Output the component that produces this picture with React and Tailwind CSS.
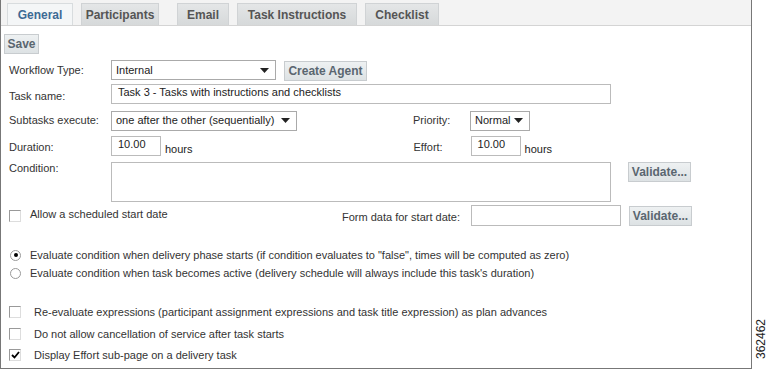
import React from "react";

const font = { fontFamily: '"Liberation Sans", Arial, sans-serif' };

function Arrow() {
  return (
    <svg width="9" height="5" viewBox="0 0 9 5" className="shrink-0">
      <path d="M0 0 H9 L4.5 5 Z" fill="#222" />
    </svg>
  );
}

function Select({ w, children }) {
  return (
    <div
      className="h-[20px] border border-[#aaa] bg-white flex items-center justify-between pl-[4px] pr-[6px] text-[11px] text-[#222]"
      style={{ width: w }}
    >
      <span>{children}</span>
      <Arrow />
    </div>
  );
}

function Btn({ children, className = "" }) {
  return (
    <div
      className={
        "h-[20px] border border-[#c8cccf] bg-gradient-to-b from-[#eef1f2] to-[#dde2e4] flex items-center justify-center text-[12px] font-bold text-[#5a6670] " +
        className
      }
    >
      {children}
    </div>
  );
}

function Check({ checked }) {
  return (
    <div className="w-[12px] h-[12px] border border-[#999] border-r-[#ddd] border-b-[#ddd] bg-white flex items-center justify-center shrink-0">
      {checked && (
        <svg width="9" height="8" viewBox="0 0 9 8">
          <path d="M1 4 L3.5 6.5 L8 1" stroke="#000" strokeWidth="1.8" fill="none" />
        </svg>
      )}
    </div>
  );
}

function Radio({ checked }) {
  return (
    <div className="w-[11px] h-[11px] rounded-full border border-[#999] bg-white flex items-center justify-center shrink-0">
      {checked && <div className="w-[4px] h-[4px] rounded-full bg-black" />}
    </div>
  );
}

function Tab({ children, active, w }) {
  return (
    <div
      className={
        "h-[22px] flex items-center justify-center text-[12px] font-bold border border-b-0 " +
        (active
          ? "bg-[#f4f6f7] text-[#3d6a94] border-[#d8dcde]"
          : "bg-gradient-to-b from-[#e4e6e7] to-[#d6d9da] text-[#555] border-[#d0d3d5]")
      }
      style={{ width: w }}
    >
      {children}
    </div>
  );
}

export default function App() {
  return (
    <div className="w-[768px] h-[370px] bg-white relative overflow-hidden text-[11px] text-[#333]" style={font}>
      <div className="w-[752px] h-[369px] border-l border-r border-b border-[#777] flex flex-col">
        {/* tab bar */}
        <div className="h-[26px] bg-[#f3f3f3] border-b border-[#d4d4d4] flex items-end pl-[6px]">
          <Tab active w={66}>General</Tab>
          <div className="w-[8px]" />
          <Tab w={78}>Participants</Tab>
          <div className="w-[18px]" />
          <Tab w={52}>Email</Tab>
          <div className="w-[8px]" />
          <Tab w={120}>Task Instructions</Tab>
          <div className="w-[8px]" />
          <Tab w={74}>Checklist</Tab>
        </div>

        <div className="pl-[3px] mt-[8px]">
          <Btn className="w-[35px] text-[11px]">Save</Btn>
        </div>

        {/* Workflow type */}
        <div className="flex items-center mt-[5px] pl-[8px]">
          <div className="w-[102px]">Workflow Type:</div>
          <Select w={165}>Internal</Select>
          <Btn className="w-[83px] ml-[8px] mt-[2px]">Create Agent</Btn>
        </div>

        {/* Task name */}
        <div className="flex items-center mt-[3px] pl-[8px]">
          <div className="w-[102px] pt-[4px]">Task name:</div>
          <div className="w-[500px] h-[20px] border border-[#bbb] bg-white pl-[6px] text-[11px] text-[#222] leading-[15px]">
            Task 3 - Tasks with instructions and checklists
          </div>
        </div>

        {/* Subtasks */}
        <div className="flex items-center mt-[6px] pl-[8px]">
          <div className="w-[102px]">Subtasks execute:</div>
          <Select w={186}>one after the other (sequentially)</Select>
          <div className="w-[116px] ml-[116px]">Priority:</div>
          <div className="-ml-[59px]">
            <Select w={60}>Normal</Select>
          </div>
        </div>

        {/* Duration */}
        <div className="flex items-center mt-[4px] pl-[8px]">
          <div className="w-[102px] pt-[2px]">Duration:</div>
          <div className="w-[50px] h-[20px] border border-[#bbb] bg-white pl-[6px] text-[11px] text-[#222] leading-[14px]">
            10.00
          </div>
          <div className="ml-[4px] pt-[6px] text-[#222]">hours</div>
          <div className="ml-[221px] w-[57px] pt-[2px]">Effort:</div>
          <div className="w-[50px] h-[20px] border border-[#bbb] bg-white pl-[6px] text-[11px] text-[#222] leading-[14px]">
            10.00
          </div>
          <div className="ml-[4px] pt-[6px] text-[#222]">hours</div>
        </div>

        {/* Condition */}
        <div className="flex items-start mt-[5px] pl-[8px]">
          <div className="w-[102px] leading-[12px]">Condition:</div>
          <div className="w-[500px] h-[40px] border border-[#bbb] bg-white" />
          <Btn className="w-[63px] ml-[17px]">Validate...</Btn>
        </div>

        {/* Allow */}
        <div className="flex items-center mt-[3px] pl-[8px] h-[21px]">
          <Check />
          <div className="ml-[9px] w-[312px] pb-[2px]">Allow a scheduled start date</div>
          <div className="w-[129px] pt-[3px]">Form data for start date:</div>
          <div className="w-[150px] h-[21px] border border-[#bbb] bg-white" />
          <Btn className="w-[63px] ml-[8px]">Validate...</Btn>
        </div>

        {/* radios */}
        <div className="flex items-center mt-[22px] pl-[9px] h-[14px]">
          <Radio checked />
          <div className="ml-[9px]">
            Evaluate condition when delivery phase starts (if condition evaluates to "false", times will be computed as zero)
          </div>
        </div>
        <div className="flex items-center mt-[4px] pl-[9px] h-[14px]">
          <Radio />
          <div className="ml-[9px]">
            Evaluate condition when task becomes active (delivery schedule will always include this task's duration)
          </div>
        </div>

        {/* checkboxes */}
        <div className="flex items-center mt-[25px] pl-[8px] h-[14px]">
          <Check />
          <div className="ml-[13px]">
            Re-evaluate expressions (participant assignment expressions and task title expression) as plan advances
          </div>
        </div>
        <div className="flex items-center mt-[8px] pl-[8px] h-[14px]">
          <Check />
          <div className="ml-[13px]">Do not allow cancellation of service after task starts</div>
        </div>
        <div className="flex items-center mt-[7px] pl-[8px] h-[14px]">
          <Check checked />
          <div className="ml-[13px]">Display Effort sub-page on a delivery task</div>
        </div>
      </div>

      <div
        className="absolute left-[755px] top-[319px] text-[12px] text-[#222] leading-[12px]"
        style={{ writingMode: "vertical-rl", transform: "rotate(180deg)" }}
      >
        362462
      </div>
    </div>
  );
}
